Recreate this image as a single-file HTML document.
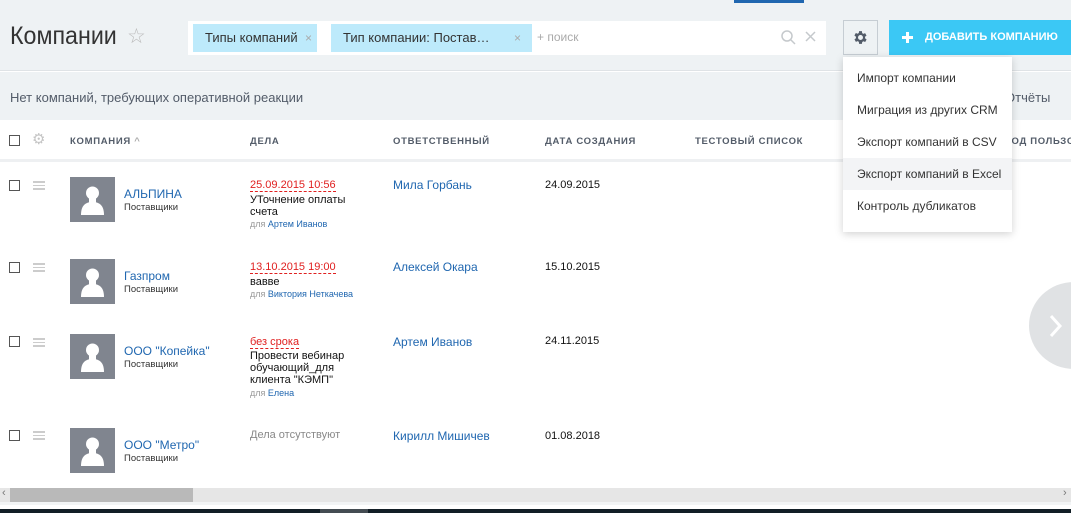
<!DOCTYPE html>
<html><head><meta charset="utf-8"><style>
*{margin:0;padding:0;box-sizing:border-box}
body{width:1071px;height:513px;overflow:hidden;position:relative;background:#fff;font-family:"Liberation Sans",Arial,sans-serif;}
.a{position:absolute;white-space:nowrap}
.top{left:0;top:0;width:1071px;height:71px;background:#eef2f4;border-bottom:1px solid #dfe3e6}
.band{left:0;top:72px;width:1071px;height:48px;background:#eef2f4}
.hd{font-size:9.5px;color:#535c69;letter-spacing:.7px;font-weight:bold;top:136px}
.cb{width:11px;height:11px;border:1px solid #555;background:#fff}
.burger{width:12px;height:9px;border-top:2px solid #ccc;border-bottom:2px solid #ccc}
.burger:after{content:"";position:absolute;left:0;top:2px;width:12px;height:1px;background:#ccc}
.av{width:45px;height:45px;background:#80858f;overflow:hidden}
.link{color:#2067b0;font-size:12px}
.sub{font-size:9.5px;color:#333}
.red{color:#e02020;font-size:11px;border-bottom:1px dashed #e02020;line-height:12px}
.tx{font-size:11px;color:#111;line-height:12px}
.dl{font-size:9px;color:#999}
.dl span{color:#2067b0}
.menu div{height:32px;line-height:32px;padding-left:14px;font-size:12px;color:#333}
</style></head><body>
<div class="a top"></div>
<div class="a" style="left:734px;top:0;width:70px;height:3px;background:#2067b0"></div>
<div class="a band"></div>
<div class="a" style="left:10px;top:22px;font-size:25px;color:#333;transform:scaleX(.93);transform-origin:left">Компании</div>
<div class="a" style="left:127px;top:24px;font-size:21px;color:#bbb">☆</div>
<div class="a" style="left:188px;top:21px;width:638px;height:34px;background:#fff"></div>
<div class="a" style="left:193px;top:24px;width:124px;height:28px;background:#bdeafb;font-size:13px;color:#333;line-height:28px;padding-left:12px">Типы компаний<span style="position:absolute;left:112px;color:#aaa;font-size:12px">×</span></div>
<div class="a" style="left:331px;top:24px;width:201px;height:28px;background:#bdeafb;font-size:13px;color:#333;line-height:28px;padding-left:12px">Тип компании: Постав…<span style="position:absolute;left:183px;color:#aaa;font-size:12px">×</span></div>
<div class="a" style="left:537px;top:30px;font-size:12px;color:#aaa">+ поиск</div>
<svg class="a" style="left:780px;top:29px" width="40" height="16"><circle cx="7" cy="7" r="5" fill="none" stroke="#c5c9cc" stroke-width="1.5"/><line x1="11" y1="11" x2="15" y2="15" stroke="#c5c9cc" stroke-width="1.5"/><path d="M26 3L35 12M35 3L26 12" stroke="#c5c9cc" stroke-width="1.5"/></svg>
<div class="a" style="left:843px;top:20px;width:35px;height:35px;border:1px solid #c6cdd3;background:#eef2f4"></div>
<svg class="a" style="left:852px;top:29px" width="17" height="17" viewBox="0 0 24 24"><path fill="#535c69" d="M19.4 13a7.5 7.5 0 000-2l2.1-1.6-2-3.5-2.5 1a7.4 7.4 0 00-1.7-1L15 3h-4l-.4 2.7a7.4 7.4 0 00-1.7 1l-2.5-1-2 3.5L6.6 11a7.5 7.5 0 000 2l-2.1 1.6 2 3.5 2.5-1a7.4 7.4 0 001.7 1L11 21h4l.4-2.7a7.4 7.4 0 001.7-1l2.5 1 2-3.5zM13 15.5a3.5 3.5 0 110-7 3.5 3.5 0 010 7z" transform="translate(-1 0)"/></svg>
<div class="a" style="left:889px;top:20px;width:182px;height:35px;background:#3bc8f5;color:#fff;font-size:11px;font-weight:bold;line-height:35px;padding-left:36px">ДОБАВИТЬ КОМПАНИЮ</div>
<div class="a" style="left:902px;top:36px;width:11px;height:3px;background:#fff"></div>
<div class="a" style="left:906px;top:32px;width:3px;height:11px;background:#fff"></div>
<div class="a" style="left:10px;top:90px;font-size:13px;color:#535c69">Нет компаний, требующих оперативной реакции</div>
<div class="a" style="left:1005px;top:90px;font-size:13px;color:#535c69">Отчёты</div>
<div class="a cb" style="left:9px;top:135px"></div>
<div class="a" style="left:32px;top:130px;font-size:15px;color:#c5c5c5">⚙</div>
<div class="a hd" style="left:70px">КОМПАНИЯ <span style="color:#aaa">^</span></div>
<div class="a hd" style="left:250px">ДЕЛА</div>
<div class="a hd" style="left:393px">ОТВЕТСТВЕННЫЙ</div>
<div class="a hd" style="left:545px">ДАТА СОЗДАНИЯ</div>
<div class="a hd" style="left:695px">ТЕСТОВЫЙ СПИСОК</div>
<div class="a hd" style="left:1005px">КОД ПОЛЬЗО</div>
<div class="a" style="left:0;top:159px;width:1071px;height:3px;background:#eef0f2"></div>

<div class="a cb" style="left:9px;top:180px"></div><div class="a burger" style="left:33px;top:181px"></div>
<div class="a av" style="left:70px;top:177px"><svg width="45" height="45"><circle cx="22.5" cy="16" r="6.5" fill="#fff"/><path d="M11 38c0-9 4-13 11.5-13S34 29 34 38z" fill="#fff"/><rect x="19" y="20" width="7" height="8" fill="#fff"/></svg></div>
<div class="a link" style="left:124px;top:187px">АЛЬПИНА</div><div class="a sub" style="left:124px;top:202px">Поставщики</div>
<div class="a red" style="left:250px;top:179px">25.09.2015 10:56</div>
<div class="a tx" style="left:250px;top:194px">УТочнение оплаты<br>счета</div>
<div class="a dl" style="left:250px;top:219px">для <span>Артем Иванов</span></div>
<div class="a link" style="left:393px;top:178px">Мила Горбань</div>
<div class="a tx" style="left:545px;top:179px">24.09.2015</div>

<div class="a cb" style="left:9px;top:262px"></div><div class="a burger" style="left:33px;top:263px"></div>
<div class="a av" style="left:70px;top:259px"><svg width="45" height="45"><circle cx="22.5" cy="16" r="6.5" fill="#fff"/><path d="M11 38c0-9 4-13 11.5-13S34 29 34 38z" fill="#fff"/><rect x="19" y="20" width="7" height="8" fill="#fff"/></svg></div>
<div class="a link" style="left:124px;top:269px">Газпром</div><div class="a sub" style="left:124px;top:284px">Поставщики</div>
<div class="a red" style="left:250px;top:261px">13.10.2015 19:00</div>
<div class="a tx" style="left:250px;top:276px">вавве</div>
<div class="a dl" style="left:250px;top:289px">для <span>Виктория Неткачева</span></div>
<div class="a link" style="left:393px;top:260px">Алексей Окара</div>
<div class="a tx" style="left:545px;top:261px">15.10.2015</div>

<div class="a cb" style="left:9px;top:336px"></div><div class="a burger" style="left:33px;top:338px"></div>
<div class="a av" style="left:70px;top:334px"><svg width="45" height="45"><circle cx="22.5" cy="16" r="6.5" fill="#fff"/><path d="M11 38c0-9 4-13 11.5-13S34 29 34 38z" fill="#fff"/><rect x="19" y="20" width="7" height="8" fill="#fff"/></svg></div>
<div class="a link" style="left:124px;top:344px">ООО "Копейка"</div><div class="a sub" style="left:124px;top:359px">Поставщики</div>
<div class="a red" style="left:250px;top:336px">без срока</div>
<div class="a tx" style="left:250px;top:350px">Провести вебинар<br>обучающий_для<br>клиента "КЭМП"</div>
<div class="a dl" style="left:250px;top:388px">для <span>Елена</span></div>
<div class="a link" style="left:393px;top:335px">Артем Иванов</div>
<div class="a tx" style="left:545px;top:335px">24.11.2015</div>

<div class="a cb" style="left:9px;top:430px"></div><div class="a burger" style="left:33px;top:431px"></div>
<div class="a av" style="left:70px;top:428px"><svg width="45" height="45"><circle cx="22.5" cy="16" r="6.5" fill="#fff"/><path d="M11 38c0-9 4-13 11.5-13S34 29 34 38z" fill="#fff"/><rect x="19" y="20" width="7" height="8" fill="#fff"/></svg></div>
<div class="a link" style="left:124px;top:438px">ООО "Метро"</div><div class="a sub" style="left:124px;top:453px">Поставщики</div>
<div class="a" style="left:250px;top:429px;font-size:11px;color:#888">Дела отсутствуют</div>
<div class="a link" style="left:393px;top:429px">Кирилл Мишичев</div>
<div class="a tx" style="left:545px;top:430px">01.08.2018</div>

<div class="a" style="left:1029px;top:282px;width:90px;height:87px;border-radius:50%;background:#e0e2e4"></div>
<svg class="a" style="left:1048px;top:313px" width="16" height="26"><path d="M3 3L12 13L3 23" stroke="#fff" stroke-width="3" fill="none"/></svg>

<div class="a menu" style="left:843px;top:57px;width:169px;height:175px;background:#fff;box-shadow:0 2px 8px rgba(0,0,0,.18);padding-top:5px">
<div>Импорт компании</div><div>Миграция из других CRM</div><div>Экспорт компаний в CSV</div><div style="background:#f3f4f6">Экспорт компаний в Excel</div><div>Контроль дубликатов</div></div>

<div class="a" style="left:0;top:488px;width:1071px;height:14px;background:#e6e6e6"></div>
<div class="a" style="left:10px;top:488px;width:183px;height:14px;background:#b9b9b9"></div>
<div class="a" style="left:2px;top:487px;font-size:11px;color:#777">‹</div>
<div class="a" style="left:1063px;top:487px;font-size:11px;color:#777">›</div>
<div class="a" style="left:0;top:502px;width:1071px;height:3px;background:#f2f4f5"></div>
<div class="a" style="left:0;top:509px;width:1071px;height:4px;background:#121e26"></div>
<div class="a" style="left:320px;top:509px;width:48px;height:4px;background:#444c52"></div>
</body></html>
